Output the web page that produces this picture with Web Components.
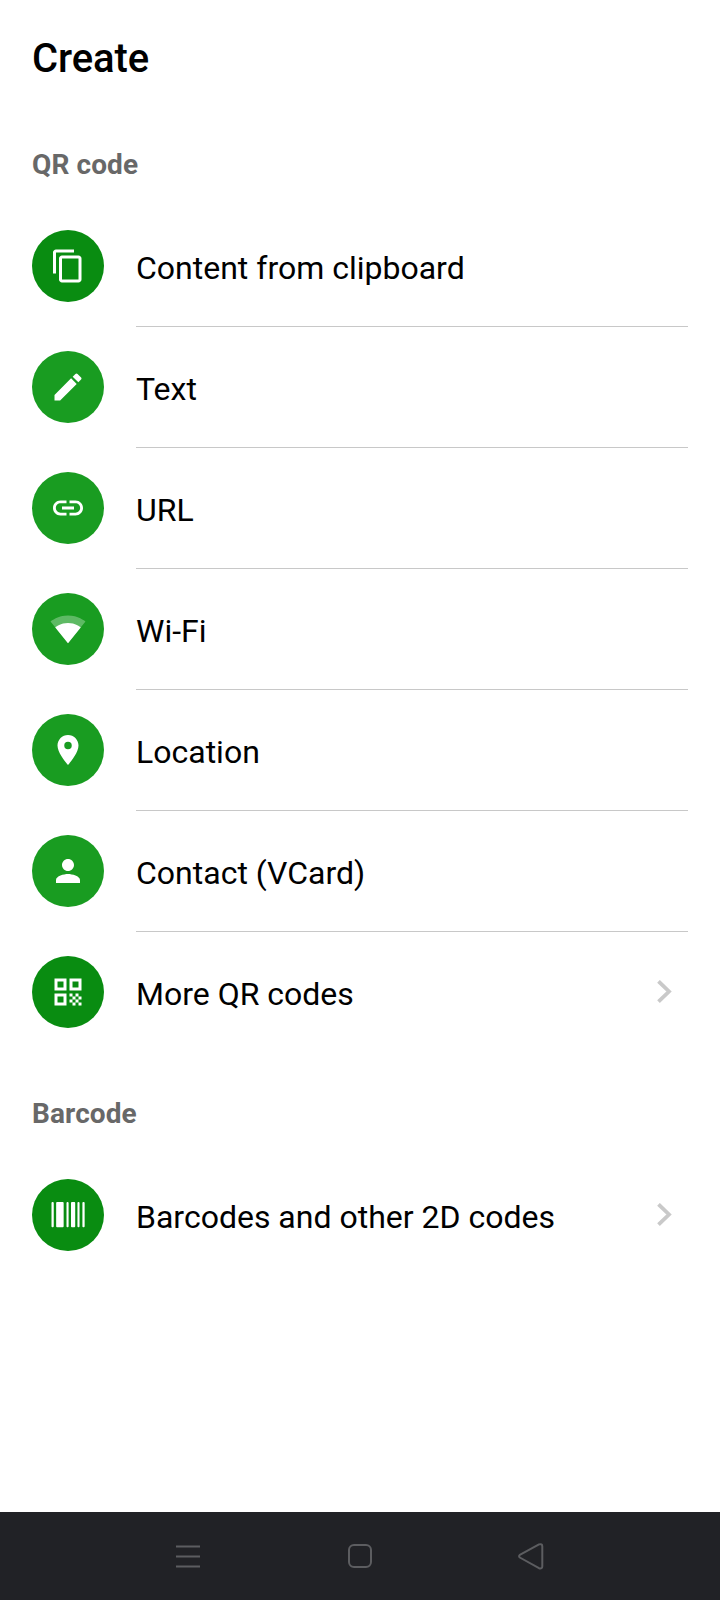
<!DOCTYPE html>
<html lang="en">
<head>
<meta charset="utf-8">
<title>Create</title>
<style>
  body { margin: 0; background: #fff; color: #000; font-family: Roboto, sans-serif; }
</style>
</head>
<body>
<create-screen></create-screen>

<script>
const ICONS = {
  copy: '<path d="M16 1H4C2.9 1 2 1.9 2 3v14h2V3h12V1zm3 4H8C6.9 5 6 5.9 6 7v14c0 1.1.9 2 2 2h11c1.1 0 2-.9 2-2V7c0-1.1-.9-2-2-2zm0 16H8V7h11v14z"/>',
  edit: '<path d="M3 17.25V21h3.75L17.81 9.94l-3.75-3.75L3 17.25zM20.71 7.04c.39-.39.39-1.02 0-1.41l-2.34-2.34a.996.996 0 0 0-1.41 0l-1.83 1.83 3.75 3.75 1.83-1.83z"/>',
  link: '<path d="M3.9 12c0-1.71 1.39-3.1 3.1-3.1h4V7H7c-2.76 0-5 2.24-5 5s2.24 5 5 5h4v-1.9H7c-1.71 0-3.1-1.39-3.1-3.1zM8 13h8v-2H8v2zm9-6h-4v1.9h4c1.71 0 3.1 1.39 3.1 3.1s-1.39 3.1-3.1 3.1h-4V17h4c2.76 0 5-2.24 5-5s-2.24-5-5-5z"/>',
  wifi: '<path fill-opacity=".3" d="M23.64 7c-.45-.34-4.93-4-11.64-4C5.28 3 .81 6.66.36 7L12 21.5z"/><path d="M3.53 10.95 12 21.5l8.47-10.55C20.04 10.62 16.81 8 12 8s-8.04 2.62-8.47 2.95z"/>',
  place: '<path d="M12 2C8.13 2 5 5.13 5 9c0 5.25 7 13 7 13s7-7.75 7-13c0-3.87-3.13-7-7-7zm0 9.5a2.5 2.5 0 0 1 0-5 2.5 2.5 0 0 1 0 5z"/>',
  person: '<path d="M12 12c2.21 0 4-1.79 4-4s-1.79-4-4-4-4 1.79-4 4 1.79 4 4 4zm0 2c-2.67 0-8 1.34-8 4v2h16v-2c0-2.66-5.33-4-8-4z"/>',
  qr: '<path d="M3 11h8V3H3v8zm2-6h4v4H5V5zM3 21h8v-8H3v8zm2-6h4v4H5v-4zM13 3v8h8V3h-8zm6 6h-4V5h4v4zM19 19h2v2h-2zM13 13h2v2h-2zM15 15h2v2h-2zM13 17h2v2h-2zM15 19h2v2h-2zM17 17h2v2h-2zM17 13h2v2h-2zM19 15h2v2h-2z"/>',
  barcode: [[1, 1.5], [4.1, 5], [11, 1.4], [14, 2.8], [18.3, 1.4], [21.6, 1.5]]
    .map(([x, w]) => `<rect x="${x}" y="3.4" width="${w}" height="16.7" rx=".6"/>`).join('')
};

class CreateIcon extends HTMLElement {
  connectedCallback() {
    const tone = this.hasAttribute('deep') ? '#098c11' : '#199c21';
    this.attachShadow({ mode: 'open' }).innerHTML = `
      <style>
        :host { display: grid; place-items: center; flex: none; width: 72px; height: 72px; border-radius: 50%; background: ${tone}; }
        svg { display: block; width: 36px; height: 36px; fill: #fff; }
      </style>
      <svg viewBox="0 0 24 24">${ICONS[this.getAttribute('name')]}</svg>`;
  }
}
customElements.define('create-icon', CreateIcon);

class CreateRow extends HTMLElement {
  connectedCallback() {
    const on = n => this.hasAttribute(n);
    this.attachShadow({ mode: 'open' }).innerHTML = `
      <style>
        :host { display: flex; align-items: flex-start; gap: 32px; padding: 0 32px; }
        create-icon { margin-top: 24px; }
        .body { flex: 1; display: flex; align-items: center; justify-content: space-between; height: 120px; padding-right: 15px; border-bottom: 1px solid ${on('last') ? 'transparent' : '#c8c8c8'}; }
        .label { font-size: 32px; line-height: 40px; padding-top: 4px; white-space: nowrap; }
        svg { display: block; width: 16px; height: 24px; fill: none; stroke: #c9c9c9; stroke-width: 3.8; }
      </style>
      <create-icon name="${this.getAttribute('icon')}" ${on('deep') ? 'deep' : ''}></create-icon>
      <div class="body"><span class="label"><slot></slot></span>
      ${on('more') ? '<svg viewBox="0 0 16 24"><path d="M1.5 1.3 12 11.5 1.5 21.7"/></svg>' : ''}</div>`;
  }
}
customElements.define('create-row', CreateRow);

class SectionTitle extends HTMLElement {
  connectedCallback() {
    this.attachShadow({ mode: 'open' }).innerHTML = `
      <style>
        :host { display: block; padding: 0 32px; font-size: 28px; line-height: 36px; font-weight: 700; letter-spacing: .1px; color: #686868; }
      </style><slot></slot>`;
  }
}
customElements.define('section-title', SectionTitle);

class SystemNav extends HTMLElement {
  connectedCallback() {
    this.attachShadow({ mode: 'open' }).innerHTML = `
      <style>
        :host { display: flex; justify-content: space-between; align-items: center; height: 88px; padding: 0 174px; box-sizing: border-box; background: #212226; }
        svg { display: block; width: 28px; height: 28px; fill: none; stroke: #5c5d60; stroke-width: 2; }
      </style>
      <svg viewBox="0 0 28 28"><path d="M2 4.4h24M2 14.4h24M2 24.4h24"/></svg>
      <svg viewBox="0 0 28 28"><rect x="3" y="3" width="22" height="22" rx="5"/></svg>
      <svg viewBox="0 0 28 28"><path stroke-linejoin="round" d="M1.8 12.9Q.5 14.2 1.8 15.5L21 26.2Q24.3 27.2 24.3 24.2V4.4Q24.3 1.4 21 2.4z"/></svg>`;
  }
}
customElements.define('system-nav', SystemNav);

class CreateScreen extends HTMLElement {
  connectedCallback() {
    this.attachShadow({ mode: 'open' }).innerHTML = `
      <style>
        :host { display: flex; flex-direction: column; height: 1600px; overflow: hidden; background: #fff; }
        h1 { margin: 0; padding: 35px 32px 0; font-size: 40px; line-height: 48px; font-weight: 500; letter-spacing: -.1px; }
        section-title { margin: 64px 0 23px; }
        section-title.second { margin: 43px 0 23px; }
        system-nav { margin-top: auto; }
      </style>
      <h1>Create</h1>
      <section-title>QR code</section-title>
      <create-row icon="copy" deep>Content from clipboard</create-row>
      <create-row icon="edit">Text</create-row>
      <create-row icon="link">URL</create-row>
      <create-row icon="wifi">Wi-Fi</create-row>
      <create-row icon="place">Location</create-row>
      <create-row icon="person">Contact (VCard)</create-row>
      <create-row icon="qr" deep more last>More QR codes</create-row>
      <section-title class="second">Barcode</section-title>
      <create-row icon="barcode" deep more last>Barcodes and other 2D codes</create-row>
      <system-nav></system-nav>`;
  }
}
customElements.define('create-screen', CreateScreen);
</script>
</body>
</html>
